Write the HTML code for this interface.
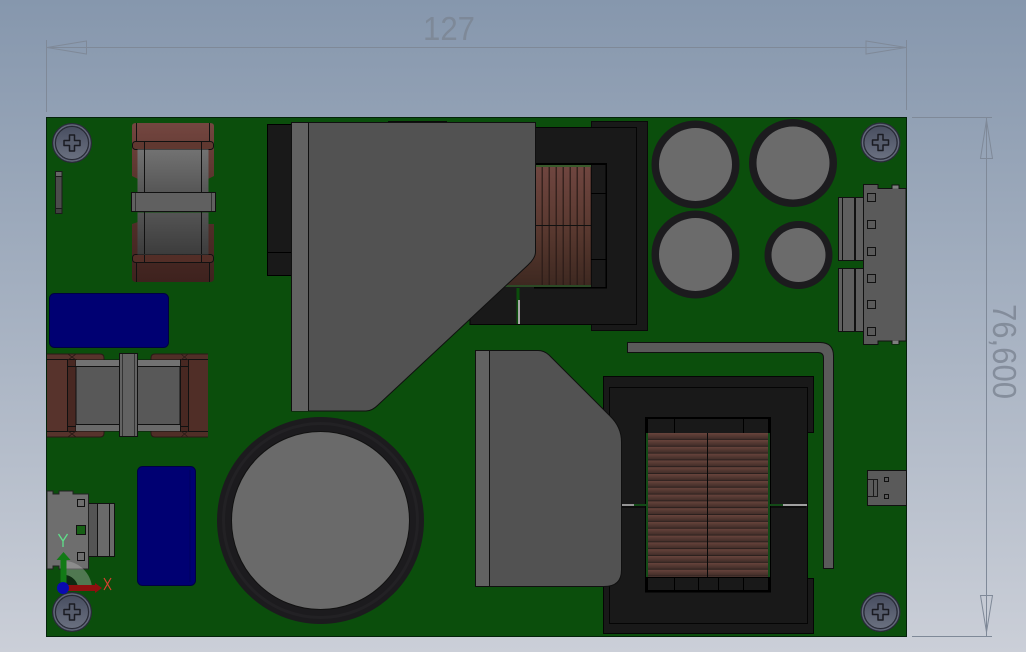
<!DOCTYPE html>
<html><head><meta charset="utf-8"><title>PCB</title>
<style>html,body{margin:0;padding:0;width:1026px;height:652px;overflow:hidden;background:#aab4c4}svg{display:block;filter:blur(.35px)}text{font-family:"Liberation Sans",sans-serif}</style></head>
<body>
<svg xmlns="http://www.w3.org/2000/svg" width="1026" height="652" viewBox="0 0 1026 652">
<defs>
<linearGradient id="bg" x1="0" y1="0" x2="0" y2="1"><stop offset="0" stop-color="#8697ad"/><stop offset=".5" stop-color="#a7b2c2"/><stop offset="1" stop-color="#cbcfd8"/></linearGradient>
<linearGradient id="cuT" x1="0" y1="0" x2="0" y2="1"><stop offset="0" stop-color="#704640"/><stop offset=".55" stop-color="#58382f"/><stop offset="1" stop-color="#3d2820"/></linearGradient>
<linearGradient id="cuH" x1="0" y1="0" x2="0" y2="1"><stop offset="0" stop-color="#744640"/><stop offset="1" stop-color="#5a352e"/></linearGradient>
<linearGradient id="cuL" x1="0" y1="0" x2="0" y2="1"><stop offset="0" stop-color="#502e28"/><stop offset="1" stop-color="#3e221e"/></linearGradient>
<linearGradient id="g1" x1="0" y1="0" x2="0" y2="1"><stop offset="0" stop-color="#727272"/><stop offset="1" stop-color="#565656"/></linearGradient>
<linearGradient id="g2" x1="0" y1="0" x2="0" y2="1"><stop offset="0" stop-color="#545454"/><stop offset="1" stop-color="#3c3c3c"/></linearGradient>
<linearGradient id="sc" x1="0" y1="0" x2="0" y2="1"><stop offset="0" stop-color="#484e60"/><stop offset="1" stop-color="#6a7080"/></linearGradient>
<linearGradient id="coil" x1="0" y1="0" x2="0" y2="1"><stop offset="0" stop-color="#68443c"/><stop offset=".85" stop-color="#432e29"/><stop offset="1" stop-color="#111"/></linearGradient>
<pattern id="coilP" x="0" y="433" width="20" height="6.83" patternUnits="userSpaceOnUse"><rect width="20" height="6.83" fill="url(#coil)"/></pattern>
<pattern id="coilV" x="536" y="0" width="7" height="400" patternUnits="userSpaceOnUse"><rect x="5.6" width="1.2" height="400" fill="#2a1a16"/></pattern>
<g id="screw">
<circle r="20" fill="#42465a"/><circle r="19.500" fill="none" stroke="#23252e" stroke-width=".8"/><circle r="18" fill="none" stroke="#6f7583" stroke-width=".8"/><circle r="16.500" fill="url(#sc)" stroke="#262832" stroke-width="1"/>
<path d="M-2.500-8h5v5.500h5.500v5h-5.500v5.500h-5v-5.500h-5.500v-5h5.500z" fill="#565c6c" stroke="#1a1b22" stroke-width="1.500" stroke-linejoin="round"/>
</g>
</defs>
<rect width="1026" height="652" fill="url(#bg)"/>

<!-- dimensions -->
<g fill="none" stroke="#7f8998" stroke-width="1">
<path d="M46.500 40V112M906.500 40V110M47 47.500H906"/>
<path d="M47 47.500L86.500 41V54ZM906 47.500L866 41V54Z"/>
<path d="M986.500 118V636M912 117.500H992M912 636.500H992"/>
<path d="M986.500 120L980.500 158.500H992.500ZM986.500 632L980.500 595.500H992.500Z"/>
</g>
<text x="423" y="40" font-size="33" fill="#79828f" fill-opacity=".7" textLength="52" lengthAdjust="spacingAndGlyphs">127</text>
<text transform="translate(993,304) rotate(90)" font-size="33" fill="#7a8391" fill-opacity=".8" textLength="95" lengthAdjust="spacingAndGlyphs">76,600</text>

<!-- board -->
<rect x="46.500" y="117.500" width="860" height="519" fill="#0b4e0c" stroke="#03220a" stroke-width="1"/>

<!-- small part -->
<rect x="55.500" y="171.500" width="6.500" height="42" fill="#4c4c4c" stroke="#1c1c1c"/>
<rect x="55.500" y="171.500" width="6.500" height="5" fill="#666" stroke="#1c1c1c"/>
<rect x="55.500" y="208.500" width="6.500" height="5" fill="#404040" stroke="#1c1c1c"/>

<!-- inductor 1 -->
<g stroke="#111" stroke-width="1">
<path d="M132 126Q132 123 136 123H210Q214 123 214 126V176L208 179V149H138V179L132 176Z" fill="url(#cuH)" stroke="none"/>
<path d="M132 224L138 222V254H208V224L214 224V278Q214 282 210 282H136Q132 282 132 278Z" fill="url(#cuL)" stroke="none"/>
<rect x="132.500" y="141.500" width="81" height="8" rx="3" fill="#603830"/>
<rect x="132.500" y="254.500" width="81" height="8" rx="3" fill="#532e27"/>
<path d="M136.500 123V141M136.500 262V282M209.500 123V141M209.500 262V282M144.500 141V149M144.500 254V262M201.500 141V149M201.500 254V262" fill="none"/>
<rect x="137.500" y="149.500" width="71" height="43" fill="url(#g1)" stroke="none"/>
<rect x="137.500" y="212.500" width="71" height="42" fill="url(#g2)" stroke="none"/>
<path d="M144.500 149V192M144.500 212V254M201.500 149V192M201.500 212V254" fill="none"/>
<rect x="131.500" y="192.500" width="84" height="19" fill="#606060"/>
<path d="M135.500 193V211M211.500 193V211" fill="none" stroke="#333"/>
</g>

<!-- blue caps -->
<rect x="49.500" y="293.500" width="119" height="54" rx="5" fill="#000072" stroke="#000044"/>
<rect x="137.500" y="466.500" width="58" height="119" rx="5" fill="#000072" stroke="#000044"/>
<path d="M190 470V582" stroke="#00005e" stroke-width="1"/>

<!-- inductor 2 -->
<g stroke="#111" stroke-width="1">
<path d="M47 354H100Q104 354 104 358V360H76V430H104V433Q104 437 100 437H47Z" fill="#57332c" stroke="none"/>
<path d="M208 354H155Q151 354 151 358V360H180V430H151V433Q151 437 155 437H208Z" fill="#502e27" stroke="none"/>
<path d="M47 354H100Q104 354 104 358V360M104 430V433Q104 437 100 437H47M208 354H155Q151 354 151 358V360M151 430V433Q151 437 155 437H208" fill="none" stroke="#2a1a16"/>
<rect x="67.500" y="359.500" width="8.500" height="72" fill="#482822"/>
<rect x="180.500" y="359.500" width="8" height="72" fill="#482822"/>
<path d="M47 359.500H67M188 359.500H208M68 426.500H76M181 426.500H188M68 366.500H76M181 366.500H188M47 431.500H67M188 431.500H208" fill="none"/>
<path d="M68 354L76 360M76 354L68 360M68 431L76 437M76 431L68 437M181 354L188 360M188 354L181 360M181 431L188 437M188 431L181 437" fill="none" stroke="#2a1a16" stroke-width=".8"/>
<rect x="76" y="360" width="104" height="71" fill="#585858"/>
<rect x="76" y="360" width="104" height="7" fill="#727272" stroke="none"/>
<rect x="76" y="424" width="104" height="7" fill="#6a6a6a" stroke="none"/>
<path d="M76 366.500H180M76 424.500H180" fill="none"/>
<rect x="119.500" y="353.500" width="18" height="83" fill="#626262"/>
<path d="M122.500 354V436M134.500 354V436" fill="none" stroke="#333"/>
</g>

<!-- left connector -->
<g stroke="#111" stroke-width="1">
<rect x="88.500" y="503.500" width="26" height="53" fill="#545454"/>
<rect x="97.500" y="503.500" width="17" height="53" fill="#6a6a6a"/>
<path d="M109.500 503V556" fill="none"/>
<path d="M47 491H53V494H59V491H73V494H88.500V569H59V566H53V569H47Z" fill="#6e6e6e" stroke="#222"/>
<rect x="77.500" y="499.500" width="7" height="7" fill="#6e6e6e"/>
<rect x="76.500" y="525.500" width="9" height="9" fill="#176016"/>
<rect x="77.500" y="552.500" width="7" height="8" fill="#6e6e6e"/>
</g>

<!-- left black block -->
<rect x="267.500" y="124.500" width="24" height="151" fill="#191919" stroke="#000"/>
<path d="M268 252.500H291" stroke="#000"/>
<rect x="388" y="121" width="59" height="3" fill="#0a0a0a"/>

<!-- top transformer -->
<rect x="591.500" y="121.500" width="56" height="209" fill="#191919" stroke="#0a0a0a"/>
<rect x="470" y="127.500" width="166.500" height="197" fill="#191919" stroke="#050505"/>
<rect x="534" y="163" width="73" height="125.500" fill="#000"/>
<rect x="500" y="165" width="91" height="122" fill="url(#cuT)"/>
<rect x="536" y="165" width="55" height="122" fill="url(#coilV)"/>
<rect x="500" y="165" width="91" height="2" fill="#3a5a2c"/>
<rect x="500" y="285" width="91" height="2" fill="#2c4a26"/>
<path d="M500 225.500H591" stroke="#111"/>
<rect x="591.500" y="165" width="14" height="122" fill="#191919"/>
<path d="M591 193.500H606M591 259.500H606" stroke="#000"/>
<rect x="516.500" y="288" width="3" height="36" fill="#0b4e0c"/>
<rect x="518" y="300" width="2" height="24" fill="#a8a8a8"/>

<!-- heatsink 1 -->
<path d="M291.500 122.500H535.500V252Q535.500 258 528 265L378 405Q372 411 366 411H291.500Z" fill="#525252" stroke="#101010" stroke-width="1"/>
<rect x="292" y="123" width="16" height="288" fill="#626262"/>
<path d="M308.500 123V411" stroke="#101010"/>

<!-- big cap -->
<circle cx="320.500" cy="520.500" r="103.500" fill="#1c1b1e"/>
<circle cx="320.500" cy="520.500" r="97" fill="none" stroke="#222124" stroke-width="3"/>
<circle cx="320.500" cy="520.500" r="89" fill="#6a6a6a" stroke="#111"/>

<!-- small caps -->
<g>
<circle cx="695.500" cy="164.500" r="44" fill="#1c1b1e"/><circle cx="695.500" cy="164.500" r="36.500" fill="#6b6b6b"/>
<circle cx="793" cy="163" r="44" fill="#1c1b1e"/><circle cx="793" cy="163" r="36.500" fill="#6b6b6b"/>
<circle cx="695.500" cy="254.500" r="44" fill="#1c1b1e"/><circle cx="695.500" cy="254.500" r="36.500" fill="#6b6b6b"/>
<circle cx="798.500" cy="255" r="34" fill="#1c1b1e"/><circle cx="798.500" cy="255" r="27" fill="#6b6b6b"/>
</g>

<!-- J bar -->
<path d="M627.500 342.500H820Q833.500 342.500 833.500 356V568.500H823.500V358Q823.500 352.500 818 352.500H627.500Z" fill="#5a5a5a" stroke="#111"/>

<!-- bottom transformer -->
<path d="M603.500 376.500H813.500V432.500H807.500V578.500H813.500V633.500H603.500Z" fill="#191919" stroke="#050505"/>
<path d="M609.500 623.500V387.500H807.500V623.500Z" fill="none" stroke="#050505"/>
<rect x="645" y="417" width="126" height="175.500" fill="#000"/>
<rect x="648" y="419" width="120" height="14" fill="#191919"/>
<rect x="648" y="578" width="120" height="12" fill="#191919"/>
<path d="M674.500 419V433M743.500 419V433M674.500 578V590M698.500 578V590M718.500 578V590M743.500 578V590" stroke="#000"/>
<rect x="646" y="433" width="124" height="144" fill="#134a17"/>
<rect x="648" y="433" width="120" height="144" fill="url(#coilP)"/>
<path d="M707.500 433V577" stroke="#0a0a0a"/>
<rect x="622" y="504" width="24" height="2" fill="#949494"/>
<rect x="634" y="504" width="12" height="2" fill="#134a17"/>
<rect x="771" y="504" width="36" height="2" fill="#a0a0a0"/>
<rect x="770" y="504" width="13" height="2" fill="#134a17"/>
<path d="M622 507H645M771 507H806" stroke="#000"/>

<!-- heatsink 2 -->
<path d="M475.500 350.500H538Q544 350.500 549 355L610 416Q621.500 427 621.500 442V570Q621.500 586.500 604 586.500H475.500Z" fill="#525252" stroke="#101010"/>
<rect x="476" y="351" width="13" height="235" fill="#626262"/>
<path d="M489.500 351V586" stroke="#101010"/>

<!-- right connector -->
<g stroke="#111" stroke-width="1">
<rect x="838.500" y="197.500" width="25" height="63" fill="#5f5f5f"/>
<rect x="838.500" y="268.500" width="25" height="63" fill="#5f5f5f"/>
<path d="M842.500 197V260M842.500 268V331" fill="none"/>
<path d="M855 197V260M855 268V331" fill="none" stroke-width="2"/>
<path d="M906 188.500H899V185H892V188.500H878V184.500H863.500V344.500H878V341H892V344H899V341H906Z" fill="#5a5a5a"/>
<rect x="892.500" y="185.500" width="6" height="3" fill="#7e7e7e" stroke="none"/>
<rect x="892.500" y="341" width="6" height="3" fill="#7e7e7e" stroke="none"/>
<g fill="#5a5a5a">
<rect x="867.500" y="193.500" width="8" height="8"/><rect x="867.500" y="220.500" width="8" height="8"/><rect x="867.500" y="247.500" width="8" height="8"/><rect x="867.500" y="274.500" width="8" height="8"/><rect x="867.500" y="300.500" width="8" height="8"/><rect x="867.500" y="327.500" width="8" height="8"/>
</g>
</g>

<!-- small right connector -->
<g stroke="#111" stroke-width="1">
<rect x="867.500" y="470.500" width="39" height="35" fill="#5a5a5a"/>
<path d="M868 479.500H877.500V496.500H868M873.500 479.500V496.500" fill="none" stroke="#1a1a1a"/>
<rect x="884.500" y="477.500" width="4" height="4" fill="#5a5a5a"/>
<rect x="884.500" y="494.500" width="4" height="4" fill="#5a5a5a"/>
</g>

<!-- screws -->
<use href="#screw" x="72" y="143"/>
<use href="#screw" x="880.500" y="142.500"/>
<use href="#screw" x="72" y="612"/>
<use href="#screw" x="880.500" y="612"/>

<!-- triad -->
<path d="M66 561A29 29 0 0 1 92 587H78A15 15 0 0 0 66 575Z" fill="#b8b8b8" fill-opacity=".4"/>
<path d="M66 575A15 15 0 0 1 78 587H66Z" fill="#0e2a12"/>
<rect x="60.500" y="558" width="6" height="28" fill="#127a16"/>
<path d="M56.500 560L63.500 552L70.500 560Z" fill="#127a16"/>
<rect x="68" y="585" width="28" height="6" fill="#8e0f0f"/>
<path d="M95 583L102 588L95 593Z" fill="#8e0f0f"/>
<circle cx="63" cy="588" r="6" fill="#0a0ab0"/>
<path d="M58.500 534L63 541L67.500 534M63 541V547" fill="none" stroke="#5fe08a" stroke-width="1.300"/>
<path d="M104 578L111 590M111 578L104 590" fill="none" stroke="#d8402f" stroke-width="1.200"/>
</svg>
</body></html>
